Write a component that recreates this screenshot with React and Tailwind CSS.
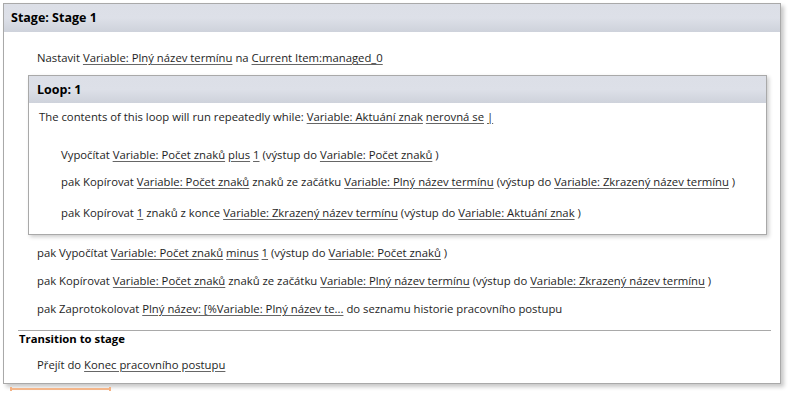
import React from 'react';

const L = ({ children }) => (
  <span className="underline decoration-[#666] underline-offset-2">{children}</span>
);

const Row = ({ className = '', children }) => (
  <div className={`h-[20px] leading-[20px] whitespace-nowrap ${className}`}>{children}</div>
);

export default function App() {
  return (
    <div className="relative w-[793px] h-[399px] bg-white text-[11.3px] text-[#1e1e1e] font-['Open_Sans','Noto_Sans',sans-serif]">
      <div className="pt-[3px] pl-[3px]">
        {/* Stage box */}
        <div className="w-[778px] border border-[#a9a9a9] bg-white shadow-[3px_3px_4px_rgba(0,0,0,0.22)]">
          <div className="h-[28px] leading-[28px] pl-[7px] bg-gradient-to-b from-[#dcdfe7] via-[#dde0e8] to-[#ced2db] font-bold text-[12.5px] text-black">
            Stage: Stage 1
          </div>

          <Row className="mt-[16px] pl-[33px]">
            Nastavit <L>Variable: Plný název termínu</L> na <L>Current Item:managed_0</L>
          </Row>

          {/* Loop box */}
          <div className="mt-[7px] ml-[24px] mr-[13px] border border-[#a9a9a9] bg-white shadow-[2px_2px_4px_rgba(0,0,0,0.2)] pb-[11px]">
            <div className="h-[27px] leading-[27px] pl-[8px] bg-gradient-to-b from-[#dcdfe7] via-[#dde0e8] to-[#ced2db] font-bold text-[12.5px] text-black">
              Loop: 1
            </div>
            <Row className="mt-[4px] pl-[10px]">
              The contents of this loop will run repeatedly while: <L>Variable: Aktuání znak</L> <L>nerovná se</L> <L>|</L>
            </Row>
            <Row className="mt-[18px] pl-[32px]">
              Vypočítat <L>Variable: Počet znaků</L> <L>plus</L> <L>1</L> (výstup do <L>Variable: Počet znaků</L> )
            </Row>
            <Row className="mt-[7px] pl-[32px]">
              pak Kopírovat <L>Variable: Počet znaků</L> znaků ze začátku <L>Variable: Plný název termínu</L> (výstup do <L>Variable: Zkrazený název termínu</L> )
            </Row>
            <Row className="mt-[11px] pl-[32px]">
              pak Kopírovat <L>1</L> znaků z konce <L>Variable: Zkrazený název termínu</L> (výstup do <L>Variable: Aktuání znak</L> )
            </Row>
          </div>

          <Row className="mt-[8px] pl-[33px]">
            pak Vypočítat <L>Variable: Počet znaků</L> <L>minus</L> <L>1</L> (výstup do <L>Variable: Počet znaků</L> )
          </Row>
          <Row className="mt-[8px] pl-[33px]">
            pak Kopírovat <L>Variable: Počet znaků</L> znaků ze začátku <L>Variable: Plný název termínu</L> (výstup do <L>Variable: Zkrazený název termínu</L> )
          </Row>
          <Row className="mt-[8px] pl-[33px]">
            pak Zaprotokolovat <L>Plný název: [%Variable: Plný název te...</L> do seznamu historie pracovního postupu
          </Row>

          <div className="mt-[11px] ml-[14px] mr-[9px] h-px bg-[#a9a9a9]" />
          <div className="h-[16px] leading-[16px] pl-[15px] font-bold text-black">Transition to stage</div>
          <Row className="mt-[8px] pl-[33px] mb-[8px]">
            Přejít do <L>Konec pracovního postupu</L>
          </Row>
        </div>

        {/* orange drag marker */}
        <div className="mt-[3px] ml-[7px] w-[101px] flex items-center">
          <div className="w-[2px] h-[4px] bg-[#f3b183]" />
          <div className="flex-1 h-[2px] bg-[#f4b68a]" />
          <div className="w-[2px] h-[4px] bg-[#f3b183]" />
        </div>
      </div>
    </div>
  );
}
